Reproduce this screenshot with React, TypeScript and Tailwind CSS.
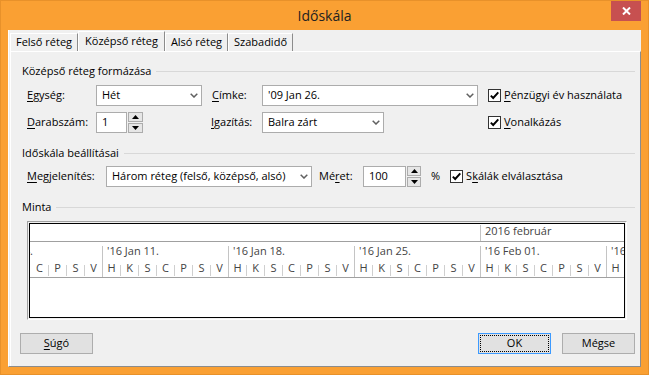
import React from "react";

const Chevron = () => (
  <svg width="8" height="5" viewBox="0 0 8 5">
    <path d="M0.7 0.7 L4 4 L7.3 0.7" fill="none" stroke="#606060" strokeWidth="1.5" />
  </svg>
);

const Combo = ({ w, text }: { w: number; text: string }) => (
  <div
    className="h-[21px] bg-white border border-[#acacac] flex items-center justify-between pl-[5px] pr-[3px] shrink-0"
    style={{ width: w }}
  >
    <span className="whitespace-nowrap">{text}</span>
    <Chevron />
  </div>
);

const Spin = ({ w }: { w: number }) => (
  <div className="flex flex-col gap-[1px] h-[21px] ml-[1px] shrink-0" style={{ width: w }}>
    <div className="h-[10px] border border-[#acacac] bg-[#e6e6e6] flex items-center justify-center">
      <svg width="7" height="4" viewBox="0 0 7 4">
        <path d="M0 4 L3.5 0 L7 4Z" fill="#000" />
      </svg>
    </div>
    <div className="h-[10px] border border-[#acacac] bg-[#e6e6e6] flex items-center justify-center">
      <svg width="7" height="4" viewBox="0 0 7 4">
        <path d="M0 0 L3.5 4 L7 0Z" fill="#000" />
      </svg>
    </div>
  </div>
);

const NumBox = ({ w, value }: { w: number; value: string }) => (
  <div
    className="h-[21px] bg-white border border-[#acacac] flex items-center pl-[5px] shrink-0"
    style={{ width: w }}
  >
    {value}
  </div>
);

const Check = ({ className = "" }: { className?: string }) => (
  <div
    className={`w-[13px] h-[13px] bg-white border border-[#333] flex items-center justify-center shrink-0 ${className}`}
  >
    <svg width="11" height="11" viewBox="0 0 11 11">
      <path d="M1.8 5.6 L4.2 8 L9.3 2.4" fill="none" stroke="#000" strokeWidth="1.9" />
    </svg>
  </div>
);

// mnemonic letter
const Mn = ({ children }: { children: React.ReactNode }) => (
  <span className="underline underline-offset-[2px] decoration-1">{children}</span>
);

const GroupHead = ({ title, mt }: { title: string; mt: string }) => (
  <div className={`flex items-center h-[15px] pl-[11px] pr-[5px] ${mt}`}>
    <span className="whitespace-nowrap">{title}</span>
    <div className="flex-1 h-px bg-[#d8d8d8] ml-[5px]" />
  </div>
);

const letters = ["H", "K", "S", "C", "P", "S", "V"];
const days = Array.from({ length: 33 }, (_, i) => letters[(i + 3) % 7]);
const weeks = ["'16 Jan 04.", "'16 Jan 11.", "'16 Jan 18.", "'16 Jan 25.", "'16 Feb 01.", "'16 Feb 08."];

const Ruler = () => (
  <div className="ml-[16px] mt-[6px] w-[600px] border-t border-l border-[#a0a0a0] border-r-white border-b-white border-r border-b p-[1px]">
    <div className="h-[95px] border border-black bg-white overflow-hidden flex flex-col text-[#444]">
      {/* months */}
      <div className="h-[18px] border-b border-[#a0a0a0] flex shrink-0">
        <div className="w-[450px] shrink-0" />
        <div className="flex-1 flex">
          <div className="w-px bg-[#c4c4c4] mt-[1px]" />
          <span className="pl-[4px] leading-[13px] whitespace-nowrap">2016 február</span>
        </div>
      </div>
      {/* weeks */}
      <div className="h-[17px] flex ml-[-54px] shrink-0">
        {weeks.map((w) => (
          <div key={w} className="w-[126px] shrink-0 flex">
            <div className="w-px bg-[#c4c4c4] mt-[4px]" />
            <span className="pl-[4px] leading-[17px] whitespace-nowrap">{w}</span>
          </div>
        ))}
      </div>
      {/* days */}
      <div className="h-[19px] border-b border-[#a0a0a0] flex shrink-0">
        {days.map((d, i) => (
          <div key={i} className="w-[18px] shrink-0 flex">
            <div
              className={
                i === 0
                  ? "w-px"
                  : (i + 3) % 7 === 0
                  ? "w-px bg-[#c4c4c4]"
                  : "w-px bg-[#cfcfcf] mt-[6px] mb-[1px]"
              }
            />
            <span className="flex-1 text-center leading-[18px]">{d}</span>
          </div>
        ))}
      </div>
    </div>
  </div>
);

const Btn = ({ children, focus = false }: { children: React.ReactNode; focus?: boolean }) => (
  <div
    className={`w-[73px] h-[21px] bg-[#e1e1e1] border flex items-center justify-center ${
      focus ? "border-[#3c9aff] outline-1 outline-dotted outline-black outline-offset-[-3px]" : "border-[#adadad]"
    }`}
  >
    {children}
  </div>
);

const Tab = ({ label, active = false, w }: { label: string; active?: boolean; w: number }) => (
  <div
    className={`flex items-center justify-center border-t border-l border-white border-r border-r-[#8c8c8c] bg-[#f0f0f0] whitespace-nowrap ${
      active ? "h-[20px]" : "h-[18px]"
    }`}
    style={{ width: w }}
  >
    {label}
  </div>
);

export default function App() {
  return (
    <div className="w-[649px] h-[375px] bg-[#faa033] border border-[#e8912a] flex flex-col font-['Open_Sans',sans-serif] text-[11px] text-black">
      <div className="h-[29px] flex items-center justify-center relative shrink-0">
        <span className="text-[14px] text-[#222]">Időskála</span>
        <div className="absolute right-[7px] top-0 w-[30px] h-[20px] bg-[#c75050] flex items-center justify-center">
          <svg width="9" height="8" viewBox="0 0 9 8">
            <path d="M1 0.5 L8 7.5 M8 0.5 L1 7.5" stroke="#fff" strokeWidth="2" />
          </svg>
        </div>
      </div>
      <div className="ml-[7px] w-[633px] h-[337px] bg-[#f0f0f0] border-l border-white border-b border-b-[#8c8c8c] flex flex-col">
        <div className="h-[21px] flex items-end pl-[1px] shrink-0">
          <Tab label="Felső réteg" w={68} />
          <Tab label="Középső réteg" w={87} active />
          <Tab label="Alsó réteg" w={63} />
          <Tab label="Szabadidő" w={65} />
        </div>
        <div className="ml-[1px] w-[631px] flex-1 border-t border-l border-white border-r border-r-[#8c8c8c] flex flex-col">
          <GroupHead title="Középső réteg formázása" mt="mt-[12px]" />
          <div className="flex items-center h-[21px] mt-[6px] pl-[16px]">
            <div className="w-[175px] flex items-center shrink-0">
              <span className="w-[69px]">
                <Mn>E</Mn>gység:
              </span>
              <Combo w={106} text="Hét" />
            </div>
            <div className="ml-[10px] w-[276px] flex items-center shrink-0">
              <span className="w-[50px]">
                <Mn>C</Mn>ímke:
              </span>
              <Combo w={216} text="'09 Jan 26." />
            </div>
            <Check />
            <span className="ml-[3px] whitespace-nowrap">
              <Mn>P</Mn>énzügyi év használata
            </span>
          </div>
          <div className="flex items-center h-[21px] mt-[6px] pl-[16px]">
            <div className="w-[175px] flex items-center shrink-0">
              <span className="w-[69px]">
                <Mn>D</Mn>arabszám:
              </span>
              <NumBox w={31} value="1" />
              <Spin w={15} />
            </div>
            <div className="ml-[9px] w-[277px] flex items-center shrink-0">
              <span className="w-[51px]">
                <Mn>I</Mn>gazítás:
              </span>
              <Combo w={122} text="Balra zárt" />
            </div>
            <Check />
            <span className="ml-[3px] whitespace-nowrap">
              <Mn>V</Mn>onalkázás
            </span>
          </div>
          <GroupHead title="Időskála beállításai" mt="mt-[13px]" />
          <div className="flex items-center h-[21px] mt-[5px] pl-[16px]">
            <span className="w-[79px] shrink-0">
              <Mn>M</Mn>egjelenítés:
            </span>
            <Combo w={206} text="Három réteg (felső, középső, alsó)" />
            <span className="ml-[7px] w-[44px] shrink-0">
              Mé<Mn>r</Mn>et:
            </span>
            <NumBox w={43} value="100" />
            <Spin w={14} />
            <span className="ml-[10px]">%</span>
            <Check className="ml-[10px]" />
            <span className="ml-[3px] whitespace-nowrap">
              S<Mn>k</Mn>álák elválasztása
            </span>
          </div>
          <GroupHead title="Minta" mt="mt-[13px]" />
          <Ruler />
          <div className="flex justify-between mt-[13px] pl-[9px] pr-[5px]">
            <Btn>
              <span>
                <Mn>S</Mn>úgó
              </span>
            </Btn>
            <div className="flex gap-[11px]">
              <Btn focus>OK</Btn>
              <Btn>Mégse</Btn>
            </div>
          </div>
        </div>
      </div>
    </div>
  );
}
